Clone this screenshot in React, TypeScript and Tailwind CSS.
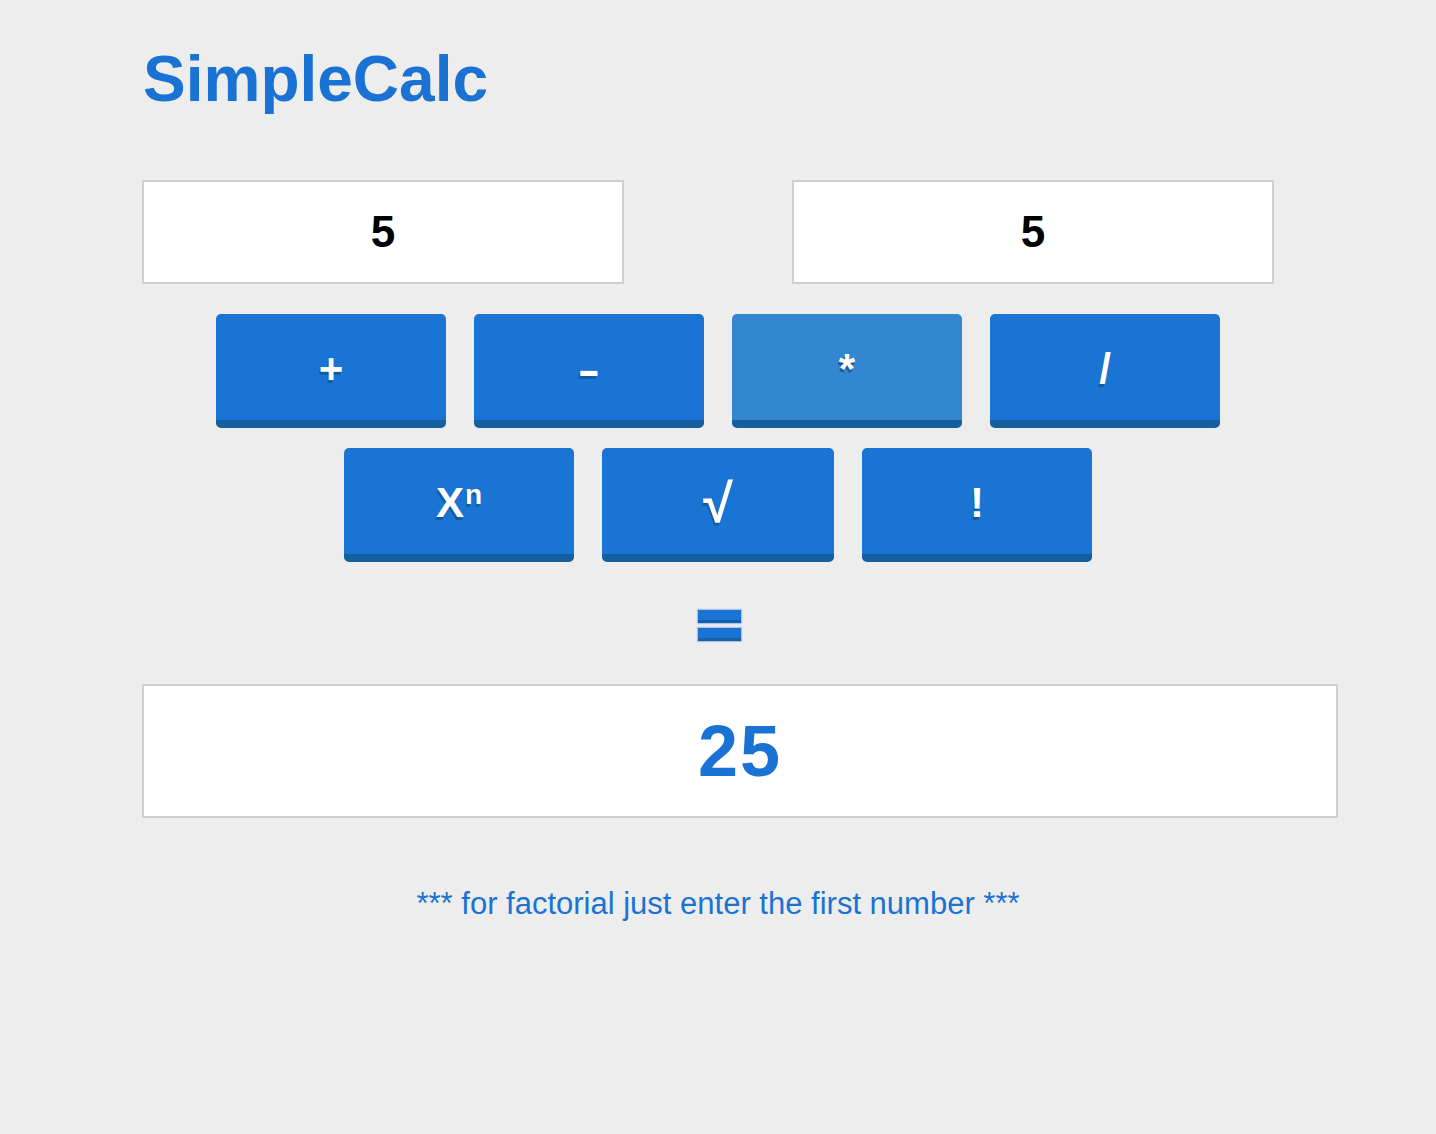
import React from "react"

const ops1 = ["+", "-", "*", "/"]

function OpButton({ label, active, wide }: { label: React.ReactNode; active?: boolean; wide?: boolean }) {
  return (
    <button
      className={
        "flex h-[114px] items-center justify-center rounded-[5px] border-b-[8px] border-[#155f9f] pt-[3px] text-[42px] font-bold leading-none text-white [text-shadow:-1px_3px_0_#155b9c] " +
        (wide ? "w-[232px] " : "w-[230px] ") +
        (active ? "bg-[#3287d0]" : "bg-[#1a74d4]")
      }
    >
      {label}
    </button>
  )
}

export default function App() {
  return (
    <div className="min-h-[1134px] w-full bg-[#ededed] font-['Liberation_Sans',Arial,sans-serif]">
      <h1 className="pl-[143px] pt-[47px] text-[64px] font-bold leading-[64px] text-[#1a73d4]">SimpleCalc</h1>

      <div className="mt-[69px] flex gap-[168px] pl-[142px]">
        <div className="flex h-[104px] w-[482px] items-center justify-center border-2 border-[#cfcfcf] bg-white text-[44px] font-bold text-black">
          5
        </div>
        <div className="flex h-[104px] w-[482px] items-center justify-center border-2 border-[#cfcfcf] bg-white text-[44px] font-bold text-black">
          5
        </div>
      </div>

      <div className="mt-[30px] flex justify-center gap-[28px]">
        {ops1.map((op) => (
          <OpButton
            key={op}
            label={op === "-" ? <span className="mt-[4px] inline-block scale-x-[1.6]">-</span> : op}
            active={op === "*"}
          />
        ))}
      </div>

      <div className="mt-[20px] flex justify-center gap-[28px]">
        <OpButton
          label={
            <span className="flex items-start">
              <span className="leading-none">X</span>
              <span className="ml-[1px] mt-[-1px] text-[28px] leading-none">n</span>
            </span>
          }
        />
        <OpButton label={<span className="text-[54px]">√</span>} wide />
        <OpButton label="!" />
      </div>

      <div className="mt-[48px] flex flex-col items-center gap-[5px]">
        <div className="ml-[2px] h-[13px] w-[43px] border-b-[3px] border-[#1560a6] bg-[#1a74d4] shadow-[0_0_1px_1px_rgba(90,150,220,0.45)]" />
        <div className="ml-[2px] h-[13px] w-[43px] border-b-[3px] border-[#1560a6] bg-[#1a74d4] shadow-[0_0_1px_1px_rgba(90,150,220,0.45)]" />
      </div>

      <div className="ml-[142px] mt-[43px] flex h-[134px] w-[1196px] items-center justify-center border-2 border-[#cfcfcf] bg-white text-[72px] font-bold tracking-[2px] text-[#1a73d4]">
        25
      </div>

      <p className="mt-[69px] text-center text-[31px] leading-[34px] text-[#1a73d4]">
        *** for factorial just enter the first number ***
      </p>
    </div>
  )
}
